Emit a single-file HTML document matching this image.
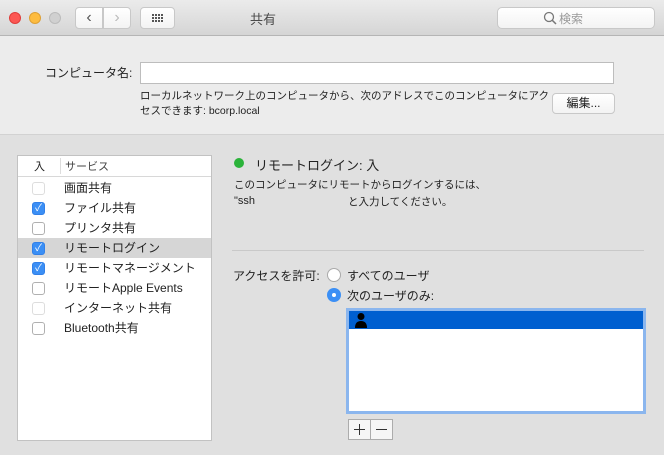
<!DOCTYPE html><html><head><meta charset="utf-8"><style>
*{box-sizing:border-box;margin:0;padding:0}
body{width:664px;height:455px;overflow:hidden;background:#e0e0e0;font-family:"Liberation Sans","Noto Sans CJK JP",sans-serif;color:#222;position:relative;font-size:12px}
.abs{position:absolute}
.tb{left:0;top:0;width:664px;height:36px;background:linear-gradient(#ebebeb,#d5d5d5);border-bottom:1px solid #b5b5b5}
.light{width:12px;height:12px;border-radius:50%;top:12px}
.btn{background:linear-gradient(#fff,#f3f3f3);border:1px solid #c8c8c8;border-radius:4px}
.top{left:0;top:36px;width:664px;height:99px;background:#ececec;border-bottom:1px solid #d2d2d2}
.cb{width:13px;height:13px;border-radius:3px;border:1px solid #b0b0b0;background:#fff;left:32px}
.cb.on{background:#3b8ff5;border-color:#3180e8;color:#fff;font-size:10px;line-height:11px;text-align:center}
.row{left:64px;font-size:12px}
</style></head><body>
<div class="abs tb"></div>
<div class="abs light" style="left:9px;background:#fc5753;border:1px solid #df3d3a"></div>
<div class="abs light" style="left:29px;background:#fdbc40;border:1px solid #dea034"></div>
<div class="abs light" style="left:49px;background:#d0d0d0;border:1px solid #bbb"></div>
<div class="abs btn" style="left:75px;top:7px;width:28px;height:22px;border-radius:4px 0 0 4px;text-align:center;font-size:16px;line-height:19px;color:#555">&#x2039;</div>
<div class="abs btn" style="left:103px;top:7px;width:28px;height:22px;border-radius:0 4px 4px 0;text-align:center;font-size:16px;line-height:19px;color:#bbb">&#x203A;</div>
<div class="abs btn" style="left:140px;top:7px;width:35px;height:22px">
<svg width="35" height="22" style="position:absolute;left:-1px;top:-1px"><g fill="#555"><rect x="12" y="7" width="2" height="2"/><rect x="15" y="7" width="2" height="2"/><rect x="18" y="7" width="2" height="2"/><rect x="21" y="7" width="2" height="2"/><rect x="12" y="10" width="2" height="2"/><rect x="15" y="10" width="2" height="2"/><rect x="18" y="10" width="2" height="2"/><rect x="21" y="10" width="2" height="2"/><rect x="12" y="13" width="2" height="2"/><rect x="15" y="13" width="2" height="2"/><rect x="18" y="13" width="2" height="2"/><rect x="21" y="13" width="2" height="2"/></g></svg></div>
<div class="abs" style="left:250px;top:9px;font-size:13px;color:#4a4a4a">共有</div>
<div class="abs btn" style="left:497px;top:7px;width:158px;height:22px;border-radius:5px"></div>
<svg class="abs" style="left:543px;top:11px" width="14" height="14"><circle cx="6" cy="6" r="4.5" fill="none" stroke="#777" stroke-width="1.3"/><line x1="9.3" y1="9.3" x2="13" y2="13" stroke="#777" stroke-width="1.5"/></svg>
<div class="abs" style="left:559px;top:10px;font-size:12px;color:#999">検索</div>
<div class="abs top"></div>
<div class="abs" style="left:45px;top:64px;font-size:12px">コンピュータ名:</div>
<div class="abs" style="left:140px;top:62px;width:474px;height:22px;background:#fff;border:1px solid #bdbdbd"></div>
<div class="abs" style="left:140px;top:89px;font-size:10.5px;line-height:15px;width:410px">ローカルネットワーク上のコンピュータから、次のアドレスでこのコンピュータにアクセスできます: bcorp.local</div>
<div class="abs btn" style="left:552px;top:93px;width:63px;height:21px;text-align:center;font-size:12px;line-height:19px">編集...</div>
<div class="abs" style="left:17px;top:155px;width:195px;height:286px;background:#fff;border:1px solid #c2c2c2"></div>
<div class="abs" style="left:18px;top:176px;width:193px;height:1px;background:#d8d8d8"></div>
<div class="abs" style="left:60px;top:158px;width:1px;height:16px;background:#ddd"></div>
<div class="abs" style="left:34px;top:158px;font-size:11px">入</div>
<div class="abs" style="left:65px;top:158px;font-size:11px;color:#444">サービス</div>
<div class="abs" style="left:18px;top:238px;width:193px;height:20px;background:#d6d6d6"></div>
<div class="abs cb" style="top:182px;border-color:#ddd"></div><div class="abs row" style="top:179px">画面共有</div>
<div class="abs cb on" style="top:202px">✓</div><div class="abs row" style="top:199px">ファイル共有</div>
<div class="abs cb" style="top:222px"></div><div class="abs row" style="top:219px">プリンタ共有</div>
<div class="abs cb on" style="top:242px">✓</div><div class="abs row" style="top:239px">リモートログイン</div>
<div class="abs cb on" style="top:262px">✓</div><div class="abs row" style="top:259px">リモートマネージメント</div>
<div class="abs cb" style="top:282px"></div><div class="abs row" style="top:279px">リモートApple Events</div>
<div class="abs cb" style="top:302px;border-color:#ddd"></div><div class="abs row" style="top:299px">インターネット共有</div>
<div class="abs cb" style="top:322px"></div><div class="abs row" style="top:319px">Bluetooth共有</div>
<div class="abs" style="left:234px;top:158px;width:10px;height:10px;border-radius:50%;background:#2bb33a"></div>
<div class="abs" style="left:255px;top:155px;font-size:13px">リモートログイン: 入</div>
<div class="abs" style="left:234px;top:177px;font-size:10.5px">このコンピュータにリモートからログインするには、</div>
<div class="abs" style="left:234px;top:195px;font-size:11px">"ssh</div>
<div class="abs" style="left:348px;top:194px;font-size:10.5px">と入力してください。</div>
<div class="abs" style="left:232px;top:250px;width:412px;height:1px;background:#c9c9c9"></div>
<div class="abs" style="left:233px;top:267px;font-size:12px">アクセスを許可:</div>
<div class="abs" style="left:327px;top:268px;width:14px;height:14px;border-radius:50%;background:#fff;border:1px solid #aaa"></div>
<div class="abs" style="left:347px;top:267px;font-size:12px">すべてのユーザ</div>
<div class="abs" style="left:327px;top:288px;width:14px;height:14px;border-radius:50%;background:#3b8ff5"><div style="position:absolute;left:5px;top:5px;width:4px;height:4px;border-radius:50%;background:#fff"></div></div>
<div class="abs" style="left:347px;top:287px;font-size:12px">次のユーザのみ:</div>
<div class="abs" style="left:346px;top:308px;width:300px;height:106px;background:#fff;border:3px solid #8bb6ee"></div>
<div class="abs" style="left:349px;top:311px;width:294px;height:18px;background:#005fd0"></div>
<svg class="abs" style="left:354px;top:312px" width="14" height="16"><circle cx="7" cy="4.5" r="3.5" fill="#000"/><path d="M1 16 Q1 9 7 9 Q13 9 13 16Z" fill="#000"/></svg>
<div class="abs" style="left:348px;top:419px;width:45px;height:21px;border:1px solid #acacac;background:#f6f6f6"></div>
<div class="abs" style="left:370px;top:420px;width:1px;height:19px;background:#acacac"></div>
<div class="abs" style="left:354px;top:429px;width:11px;height:1px;background:#333"></div>
<div class="abs" style="left:359px;top:424px;width:1px;height:11px;background:#333"></div>
<div class="abs" style="left:376px;top:429px;width:11px;height:1px;background:#333"></div>
</body></html>
